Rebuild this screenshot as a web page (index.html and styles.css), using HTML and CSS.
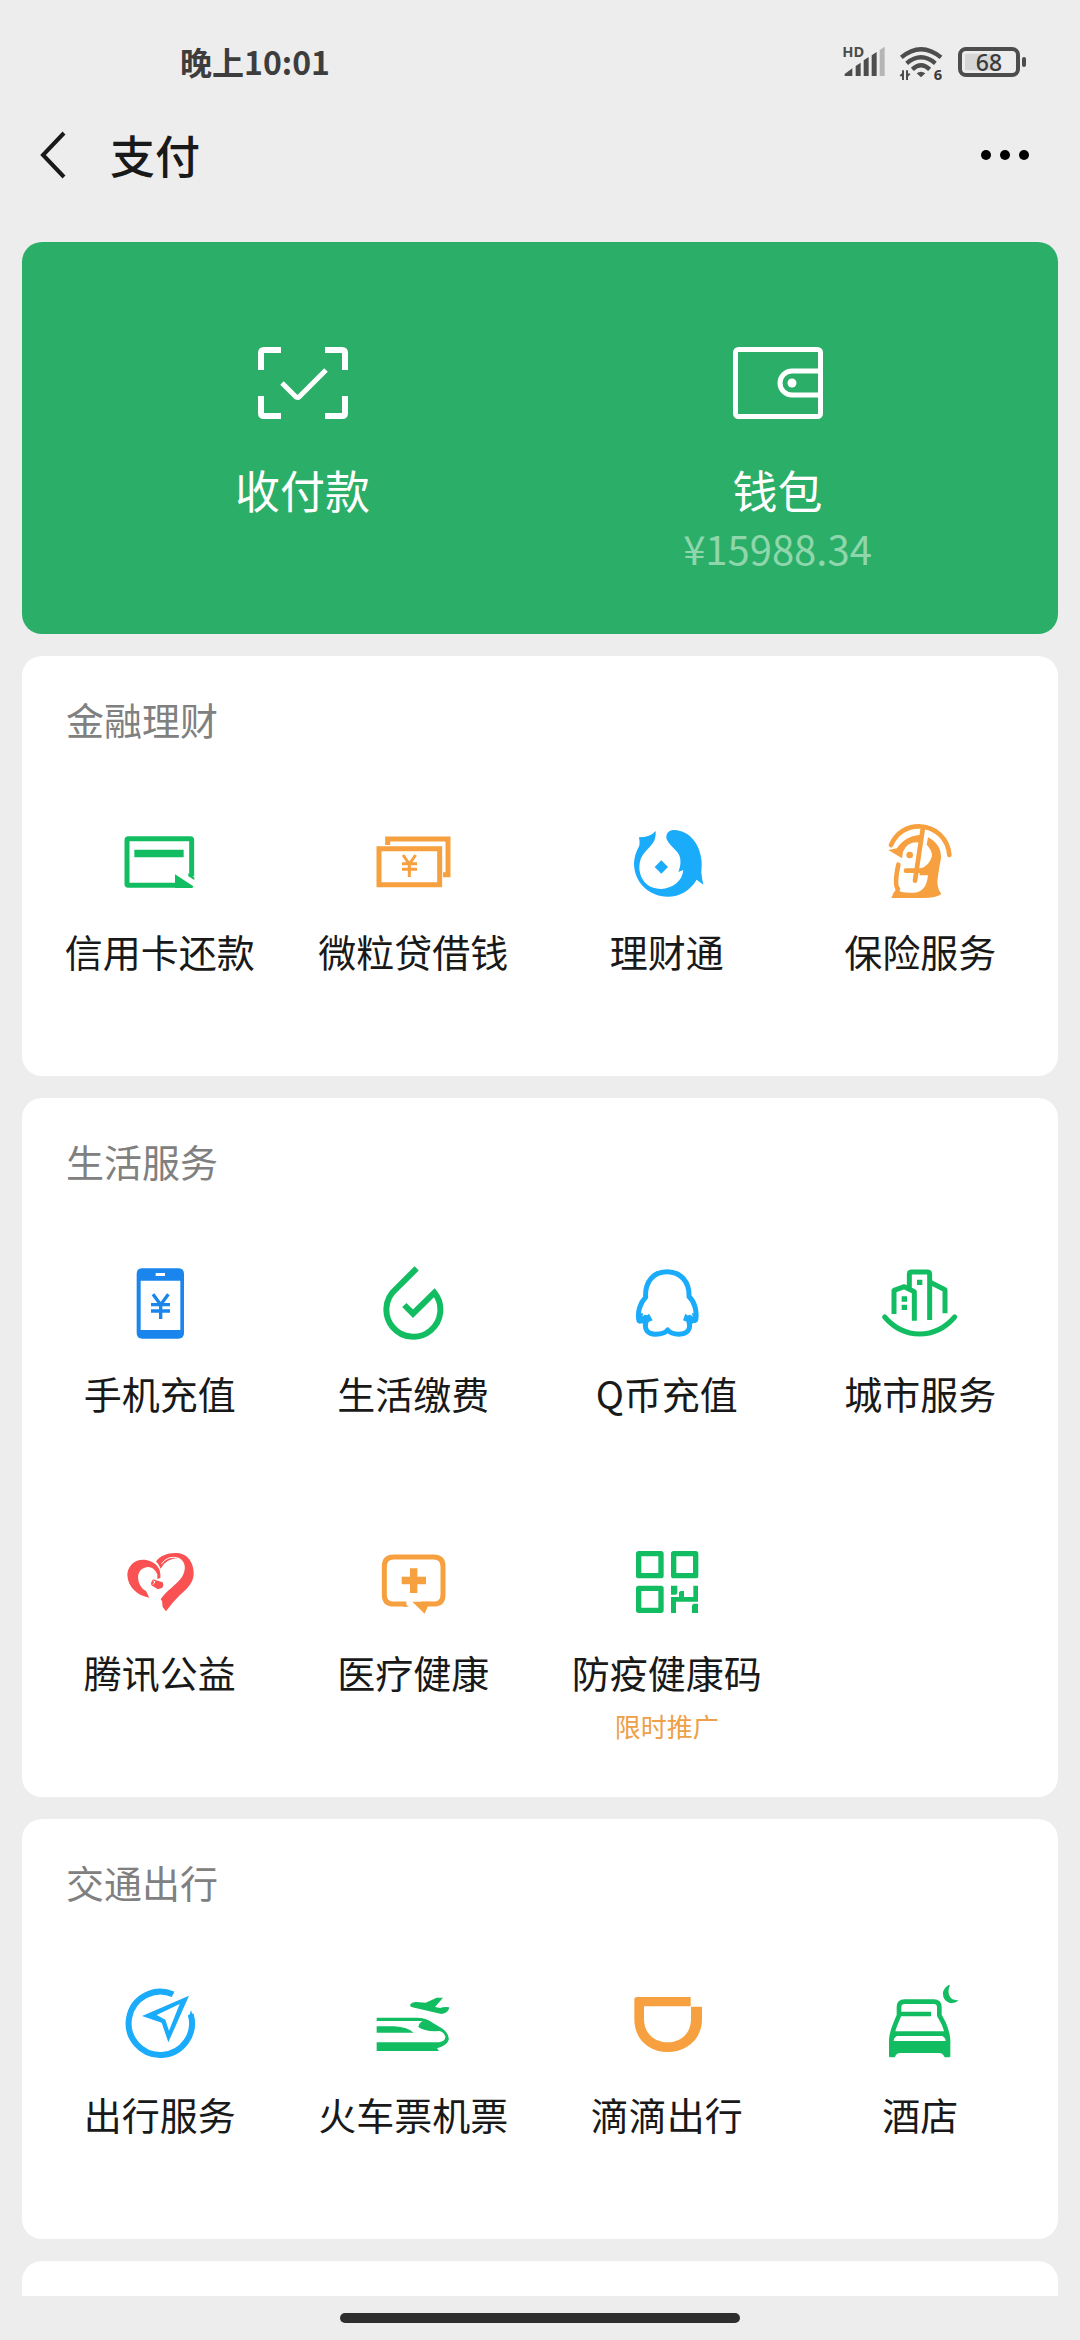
FILE: index.html
```html
<!DOCTYPE html>
<html lang="zh-CN">
<head>
<meta charset="utf-8">
<meta name="viewport" content="width=device-width, initial-scale=1">
<title>支付</title>
<link rel="stylesheet" href="styles.css">
</head>
<body>
<div class="status">
  <span class="status-time">晚上10:01</span>
  <div class="status-icons">
    <svg width="48" height="42" viewBox="118 66 144 126" fill="#4d4d4d" aria-label="HD 信号">
      <text class="svg-text" x="125" y="110" font-size="44">HD</text>
      <path d="M132 168v-6l23-17v23zM165 168v-30l15-10v40zM189 168v-47l15-10v57zM213 168v-62l15-10v72z"/>
      <path d="M237 168v-78l15-10v88z" fill="#b5b5b5"/>
    </svg>
    <svg width="48" height="42" viewBox="294 66 144 126" fill="none" stroke="#4d4d4d" stroke-width="13" aria-label="WLAN">
      <path d="M304 112Q363 63 423 112M320 130Q363 94 406 130M337 148Q363 123 389 148"/>
      <path d="M363 172l-13-12q13-10 26 0z" fill="#4d4d4d" stroke="none"/>
      <path d="M309 151v29M301 168l8-7M321 151v29M329 161l-8 8" stroke-width="6"/>
      <text class="svg-text" x="401" y="180" font-size="44" fill="#3d3d3d" stroke="none">6</text>
    </svg>
    <svg width="72" height="42" viewBox="468 66 216 126" aria-label="电量 68">
      <rect x="480" y="87" width="174" height="78" rx="18" fill="none" stroke="#4d4d4d" stroke-width="12"/>
      <path d="M500 101h95v50h-95q-5 0-5-5v-40q0-5 5-5z" fill="#d6d6d6"/>
      <rect x="666" y="111" width="12" height="30" rx="6" fill="#4d4d4d"/>
      <text class="svg-text svg-text-medium" x="567" y="152" font-size="69" text-anchor="middle" fill="#3a3a3a">68</text>
    </svg>
  </div>
</div>

<header class="topbar">
  <button class="icon-button" type="button" aria-label="返回">
    <svg width="28" height="50" viewBox="0 0 28 50" fill="none" stroke="#191919" stroke-width="4"><path d="M25 3L4 25l21 22"/></svg>
  </button>
  <h1 class="title">支付</h1>
  <button class="icon-button more" type="button" aria-label="更多">
    <svg width="50" height="12" viewBox="0 0 50 12"><circle cx="6" cy="6" r="5"/><circle cx="25" cy="6" r="5"/><circle cx="44" cy="6" r="5"/></svg>
  </button>
</header>

<main class="content">
  <section class="hero">
    <button class="hero-item" type="button">
      <svg width="90" height="72" viewBox="0 0 90 72" fill="none" stroke="#fff" stroke-width="6"><path d="M3 23V6q0-3 3-3H23M67 3H84q3 0 3 3V23M87 49V66q0 3-3 3H67M23 69H6q-3 0-3-3V49"/><path d="M24 36L38 50q2 1 3 0L68 23" stroke-width="5"/></svg>
      <span class="hero-label">收付款</span>
    </button>
    <button class="hero-item" type="button">
      <svg width="90" height="72" viewBox="0 0 90 72" fill="none" stroke="#fff" stroke-width="5"><rect x="2.500" y="2.500" width="85" height="67" rx="3"/><path d="M87 24H59a12 12 0 0 0 0 24h28"/><circle cx="59" cy="36" r="4.500" fill="#fff" stroke="none"/></svg>
      <span class="hero-label">钱包</span>
      <span class="hero-amount">¥15988.34</span>
    </button>
  </section>

  <section class="card">
    <h2 class="card-title">金融理财</h2>
    <div class="grid">
      <button class="cell" type="button">
        <svg class="icon green" viewBox="209 546 240 240"><path d="M424 708V600q0-4-4-4H234q-4 0-4 4v132q0 4 4 4h150" fill="none" stroke="currentColor" stroke-width="15"/><path d="M252 629h148v23H252zM374 703l55 36q0 5-5 5h-50z"/><path d="M414 700l18 12v8l-18-11z"/></svg>
        <span class="label">信用卡还款</span>
      </button>
      <button class="cell" type="button">
        <svg class="icon orange" viewBox="970 546 240 240" fill="none" stroke="currentColor" stroke-width="15"><path d="M988 626h182v108H988zM1014 615V597h181v107h-15"/><path d="M1060 645l19 27 19-27M1057 671h45M1057 688h45M1079 672v39" stroke-width="9"/></svg>
        <span class="label">微粒贷借钱</span>
      </button>
      <button class="cell" type="button">
        <svg class="icon sky" viewBox="260 126 240 240"><path d="M296 172Q330 172 346 153Q349 180 328 201C305 224 298 236 297 262C298 303 326 327 362 327C397 325 426 304 429 270L414 276C421 258 423 240 416 224C407 208 384 194 378 175C377 157 388 150 402 150C450 152 481 196 484 246Q484 266 483 277Q484 292 489 314L469 299C449 332 418 350 382 350C326 350 281 307 281 250Q282 223 297 197Q299 187 296 172z"/><path d="M363 241l20 20-20 20-20-20z"/></svg>
        <span class="label">理财通</span>
      </button>
      <button class="cell" type="button">
        <svg class="icon orange" viewBox="1021 126 240 240"><path d="M1054 195C1070 158 1102 139 1138 139C1188 140 1225 176 1229 225M1150 142L1126 302M1099 272H1165M1076 254Q1063 315 1075 327" fill="none" stroke="currentColor" stroke-width="14" stroke-linecap="round"/><path d="M1046 210L1072 205Q1094 168 1146 164L1144 188Q1104 182 1090 215L1087 235zM1165 172Q1205 192 1204 235Q1196 276 1193 306Q1194 328 1205 342Q1190 354 1150 354H1055Q1060 338 1070 327Q1085 341 1124 338Q1160 336 1165 286H1140V266Q1170 258 1177 227Q1177 210 1161 194z"/><circle cx="1110" cy="225" r="10"/></svg>
        <span class="label">保险服务</span>
      </button>
    </div>
  </section>

  <section class="card">
    <h2 class="card-title">生活服务</h2>
    <div class="grid">
      <button class="cell" type="button">
        <svg class="icon blue" viewBox="179 72 240 240"><path fill-rule="evenodd" d="M246 85H354q17 0 17 17V279q0 17-17 17H246q-17 0-17-17V102q0-17 17-17zM241 122V270H360V122zM286 99v9h28v-9z"/><path d="M278 163l23 31 23-31M272 194h57M272 213h57M301 194v43" fill="none" stroke="currentColor" stroke-width="10"/></svg>
        <span class="label">手机充值</span>
      </button>
      <button class="cell" type="button">
        <svg class="icon green" viewBox="940 72 240 240" fill="none" stroke="currentColor" stroke-width="18"><path d="M1071 85L1008 148A81 81 0 1 0 1124 158L1060 221 1034 195"/></svg>
        <span class="label">生活缴费</span>
      </button>
      <button class="cell" type="button">
        <svg class="icon sky" viewBox="200 72 240 240"><path d="M256 172C253 125 280 95 320 95C360 95 388 125 386 170C402 184 411 213 406 240Q398 244 388 232Q388 242 386 246C392 268 382 282 356 283Q332 282 322 270Q312 282 286 283C260 281 251 268 257 246Q254 240 255 232Q244 246 236 242C230 216 240 188 256 172z" fill="none" stroke="currentColor" stroke-width="15" stroke-linejoin="round"/><path d="M266 221l11 20-28 12-10-9zM375 221l-7 20 28 11 8-9zM236 220h12l-4 30h-8q-6-4-6-12zM395 220h14l2 16q-2 12-10 14z"/></svg>
        <span class="label">Q币充值</span>
      </button>
      <button class="cell" type="button">
        <svg class="icon green" viewBox="961 72 240 240"><g fill="none" stroke="currentColor" stroke-width="15"><path d="M1003 222V151L1034 140 1064 155V242M1049 150V102q0-6 6-6H1104q6 0 6 6V240M1110 126L1156 149V220" stroke-linejoin="round"/><path d="M975 231Q1019 282 1080 282T1185 231" stroke-linecap="round"/></g><path d="M1072 119h16v16h-16zM1026 169h16v16h-16zM1026 194h16v16h-16z"/></svg>
        <span class="label">城市服务</span>
      </button>
      <button class="cell" type="button">
        <svg class="icon red" viewBox="-1 9 240 240"><path d="M107 64C120 46 145 37 171 39C205 41 222 74 220 104C217 135 193 151 178 166Q156 188 137 214L127 201 125 183 121 178C139 151 169 134 185 111C198 90 197 64 176 54Q138 54 121 86Q115 73 107 64z"/><path d="M120 114Q124 71 78 60C42 55 21 80 21 106C23 141 50 167 87 173L77 153C51 139 42 93 73 83Q98 75 111 103V117zM98 118L127 127Q132 135 126 143L113 148 93 136 92 128z"/><path d="M99 123l5 2-6 9M123 72Q143 44 176 55" fill="none" stroke="#fff" stroke-width="3"/></svg>
        <span class="label">腾讯公益</span>
      </button>
      <button class="cell" type="button">
        <svg class="icon orange" viewBox="760 9 240 240"><path d="M860 192H822Q794 192 794 164V79Q794 51 822 51H942Q970 51 970 79V164Q970 192 942 192H905" fill="none" stroke="currentColor" stroke-width="15"/><path d="M846 110h25V85h22v25h26v23h-26v26h-22v-26h-25zM878 185h55l-9 15-9 21zM850 185l17 15h-17z"/></svg>
        <span class="label">医疗健康</span>
      </button>
      <button class="cell" type="button">
        <svg class="icon green" viewBox="0 0 240 240"><g fill="none" stroke="currentColor" stroke-width="16" stroke-linejoin="round"><path d="M35 32h67v66H35zM140 32h66v66h-66zM35 136h67v66H35z"/></g><path d="M132 128h19v22l-4 5h-15zM199 128h14v48h-66v34h-15v-48h24v-14l5-4h10v18h28zM195 187l5-5h13v28h-18z"/></svg>
        <span class="label">防疫健康码</span>
        <span class="tag">限时推广</span>
      </button>
    </div>
  </section>

  <section class="card">
    <h2 class="card-title">交通出行</h2>
    <div class="grid">
      <button class="cell" type="button">
        <svg class="icon sky" viewBox="179 75 240 240"><path d="M338 103A95 95 0 1 0 391 163" fill="none" stroke="currentColor" stroke-width="18"/><path fill-rule="evenodd" d="M386 107L324 247 304 188 245 168zM358 132L289 165 315 179 326 212z"/><path d="M322 94l20 5-12 10zM392 151l9 24-16-3z"/></svg>
        <span class="label">出行服务</span>
      </button>
      <button class="cell" type="button">
        <svg class="icon green" viewBox="940 75 240 240"><path d="M951 173H1070Q1100 173 1120 189L1150 207Q1170 224 1167 240Q1161 257 1132 265L1138 273H951V247H1138Q1158 244 1157 229Q1151 215 1140 213Q1095 216 1076 201Q1078 188 1090 184Q1080 182 1068 183H951zM951 199H1003Q1045 202 1062 218H951zM1051 134Q1057 125 1070 126L1098 128 1131 113H1150L1126 141 1142 144Q1152 140 1169 142Q1166 160 1145 162L1058 142Q1051 140 1051 134z"/></svg>
        <span class="label">火车票机票</span>
      </button>
      <button class="cell" type="button">
        <svg class="icon orange" viewBox="140 75 240 240"><path d="M170 111H331V139H191V178C191 222 225 247 262 247C299 247 332 222 332 178V140H365V178C365 238 318 276 262 276C206 276 162 238 162 178V119Q162 111 170 111z"/></svg>
        <span class="label">滴滴出行</span>
      </button>
      <button class="cell" type="button">
        <svg class="icon green" viewBox="901 75 240 240"><g fill="none" stroke="currentColor" stroke-width="14"><path d="M935 290V240Q936 218 948 190L958 166V142Q958 125 975 125H1062Q1079 125 1079 142V166L1092 190Q1104 218 1105 240V290M962 162H1054M944 221H1096"/></g><path d="M930 243H1110V292H1095Q1090 279 1078 279H962Q950 279 945 292H930zM1112 73Q1096 79 1090 96Q1088 120 1108 128Q1128 131 1137 120Q1118 123 1110 109Q1102 91 1112 73zM940 226h18q-14 4-18 18zM1100 226h-18q14 4 18 18z"/></svg>
        <span class="label">酒店</span>
      </button>
    </div>
  </section>

  <section class="card card-next" aria-label="更多服务"></section>
</main>

<footer class="gesture"><div class="gesture-bar"></div></footer>
</body>
</html>
```
FILE: styles.css
```css
* { box-sizing: border-box; }

body {
  margin: 0;
  min-height: 100vh;
  display: flex;
  flex-direction: column;
  background: #ededed;
  color: #191919;
  font-family: "Noto Sans CJK SC", "Noto Sans", sans-serif;
}

button {
  margin: 0;
  padding: 0;
  border: 0;
  background: none;
  color: inherit;
  font: inherit;
}

.status {
  display: flex;
  justify-content: space-between;
  align-items: flex-start;
  height: 86px;
  padding: 38px 52px 0 180px;
}

.status-time {
  font-size: 32px;
  line-height: 46px;
  font-weight: 700;
  color: #3d3d3d;
}

.status-icons {
  display: flex;
  gap: 10px;
  padding-top: 4px;
}

.svg-text {
  font-family: "Noto Sans", sans-serif;
  font-weight: 700;
}

.svg-text-medium { font-weight: 500; }

.topbar {
  display: flex;
  align-items: center;
  height: 156px;
  padding: 0 50px 18px 39px;
}

.icon-button { display: flex; }

.title {
  margin: 0 auto 0 43px;
  font-size: 45px;
  line-height: 60px;
  font-weight: 500;
}

.content {
  flex: 1;
  display: flex;
  flex-direction: column;
  gap: 22px;
  padding: 0 22px;
}

.hero {
  display: grid;
  grid-template-columns: 1fr 1fr;
  padding: 105px 43px 62px;
  border-radius: 20px;
  background: #2bae67;
  color: #fff;
}

.hero-item {
  display: flex;
  flex-direction: column;
  align-items: center;
}

.hero-label {
  margin-top: 41px;
  font-size: 45px;
  line-height: 60px;
}

.hero-amount {
  margin-top: 4px;
  font-size: 40px;
  line-height: 48px;
  color: #8fd6ad;
}

.card {
  padding: 0 11px;
  border-radius: 20px;
  background: #fff;
}

.card-title {
  margin: 0;
  padding: 38px 33px 53px;
  font-size: 38px;
  line-height: 50px;
  font-weight: 400;
  color: #808080;
}

.grid {
  display: grid;
  grid-template-columns: repeat(4, 1fr);
  grid-auto-rows: minmax(279px, auto);
}

.cell {
  display: flex;
  flex-direction: column;
  align-items: center;
  padding: 25px 0 20px;
}

.icon {
  width: 80px;
  height: 80px;
  fill: currentColor;
}

.icon[fill="none"] { fill: none; }

.green { color: #12bd62; }
.orange { color: #f7a03f; }
.sky { color: #1aabfb; }
.blue { color: #1a85ec; }
.red { color: #fa5252; }

.label {
  margin-top: 24px;
  font-size: 38px;
  line-height: 50px;
  white-space: nowrap;
}

.tag {
  margin-top: 12px;
  font-size: 26px;
  line-height: 34px;
  color: #eda047;
}

.card-next {
  flex: 1;
  min-height: 35px;
  border-radius: 20px 20px 0 0;
}

.gesture {
  display: flex;
  justify-content: center;
  padding: 17px 0;
}

.gesture-bar {
  width: 37%;
  height: 10px;
  border-radius: 5px;
  background: #2e2e2e;
}
```
